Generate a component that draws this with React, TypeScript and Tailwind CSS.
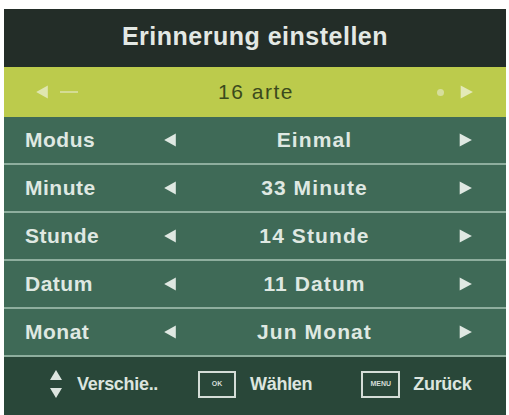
import React from "react";

const rows = [
  { label: "Modus", value: "Einmal" },
  { label: "Minute", value: "33 Minute" },
  { label: "Stunde", value: "14 Stunde" },
  { label: "Datum", value: "11 Datum" },
  { label: "Monat", value: "Jun Monat" },
];

function TriLeft({ className = "" }: { className?: string }) {
  return (
    <svg width="14" height="14" viewBox="0 0 12 12" className={className}>
      <polygon points="11,0.5 11,11.5 1,6" fill="currentColor" />
    </svg>
  );
}
function TriRight({ className = "" }: { className?: string }) {
  return (
    <svg width="15" height="14" viewBox="0 0 12 12" className={className}>
      <polygon points="1,0.5 1,11.5 11.5,6" fill="currentColor" />
    </svg>
  );
}

export default function App() {
  return (
    <div
      className="w-[509px] h-[415px] bg-white pt-[9px] pl-[4px] pr-[3px] overflow-hidden"
      style={{ fontFamily: '"Liberation Sans", Arial, sans-serif' }}
    >
      <div className="flex flex-col h-[406px] w-[502px]">
        <div className="h-[58px] bg-[#232d28] flex items-center justify-center">
          <span className="text-[25px] font-bold text-[#e3e8e4] tracking-[0.5px] pb-[2px]">
            Erinnerung einstellen
          </span>
        </div>
        <div className="h-[50px] bg-[#bccb4c] flex items-center relative">
          <div className="absolute left-[31px] top-[18px] flex items-center gap-[11px] text-[#dfe6b0]">
            <TriLeft />
            <div className="w-[18px] h-[2px] bg-[#d4dc94]" />
          </div>
          <div className="flex-1 flex justify-center">
            <span className="text-[21px] text-[#3b4a1c] tracking-[1.5px] pl-[2px]">16 arte</span>
          </div>
          <div className="absolute left-[433px] top-[18px] flex items-center gap-[15px] text-[#e3e9b8]">
            <div className="w-[7px] h-[7px] rounded-full bg-[#d6de9c]" />
            <TriRight />
          </div>
        </div>
        {rows.map((r) => (
          <div
            key={r.label}
            className="h-[48px] bg-[#3f6a57] border-b-2 border-[#8eae9e] flex items-center text-[#dfe8e2] font-bold"
          >
            <div className="w-[159px] pl-[21px] text-[21px] tracking-[0.5px]">{r.label}</div>
            <TriLeft className="text-[#dfe8e2]" />
            <div className="flex-1 text-center text-[21px] tracking-[1.1px] pr-[6px]">{r.value}</div>
            <TriRight className="text-[#dfe8e2] mr-[33px]" />
          </div>
        ))}
        <div className="flex-1 bg-[#294739] flex items-center text-[#dce5df] font-bold text-[18px] pb-[4px]">
          <div className="flex items-center ml-[45px]">
            <svg width="14" height="30" viewBox="0 0 14 30">
              <polygon points="7,1 13,11 1,11" fill="#dce5df" />
              <polygon points="1,19 13,19 7,29" fill="#dce5df" />
            </svg>
            <span className="ml-[14px] tracking-[-0.3px]">Verschie..</span>
          </div>
          <div className="flex items-center ml-[40px]">
            <div className="w-[38px] h-[27px] border-2 border-[#d4ddd7] flex items-center justify-center text-[7px] text-[#d4ddd7]">
              OK
            </div>
            <span className="ml-[14px] tracking-[-0.3px]">Wählen</span>
          </div>
          <div className="flex items-center ml-[49px]">
            <div className="w-[39px] h-[27px] border-2 border-[#d4ddd7] flex items-center justify-center text-[7px] text-[#d4ddd7]">
              MENU
            </div>
            <span className="ml-[13px] tracking-[-0.3px]">Zurück</span>
          </div>
        </div>
      </div>
    </div>
  );
}
